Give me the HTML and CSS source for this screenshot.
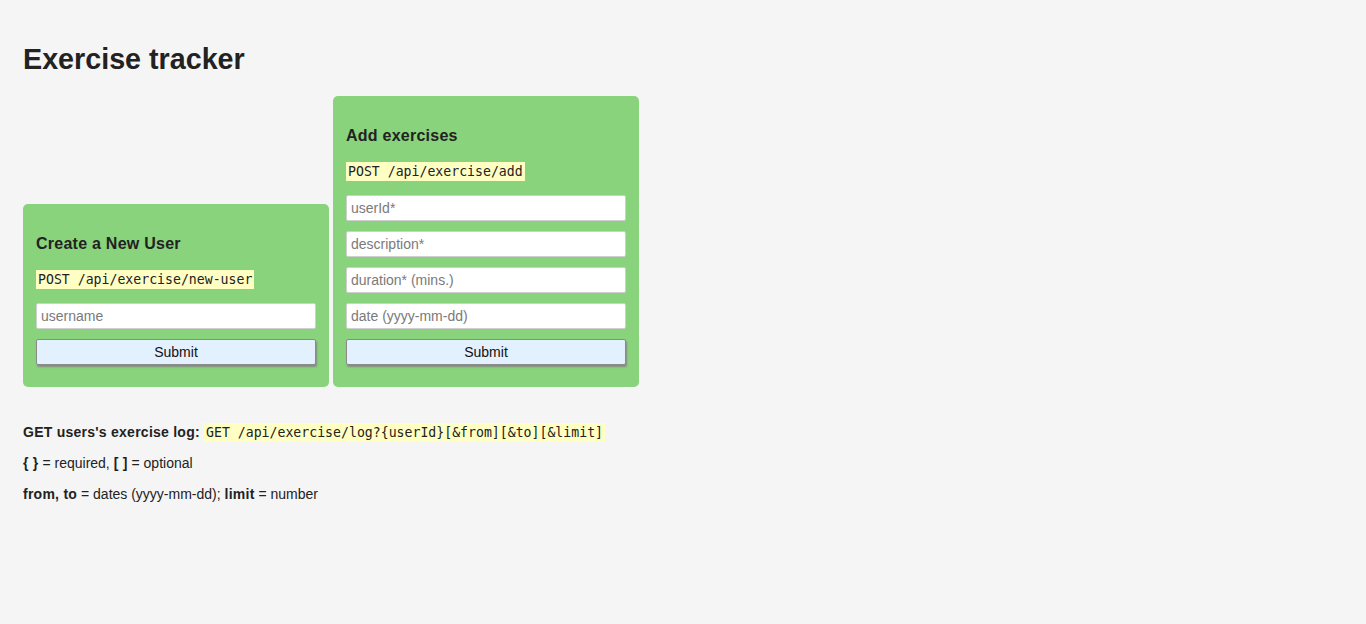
FILE: index.html
```html
<!DOCTYPE html>
<html>
<head>
<meta charset="utf-8">
<title>Exercise Tracker</title>
<link rel="stylesheet" href="styles.css">
</head>
<body>
<div class="container">
  <h1 class="title">Exercise tracker</h1>
  <div class="forms">
    <form class="card">
      <h3 class="card-title">Create a New User</h3>
      <p class="endpoint"><code>POST /api/exercise/new-user</code></p>
      <input class="field" type="text" placeholder="username">
      <button class="btn" type="button">Submit</button>
    </form>
    <form class="card">
      <h3 class="card-title">Add exercises</h3>
      <p class="endpoint"><code>POST /api/exercise/add</code></p>
      <input class="field" type="text" placeholder="userId*">
      <input class="field" type="text" placeholder="description*">
      <input class="field" type="text" placeholder="duration* (mins.)">
      <input class="field" type="text" placeholder="date (yyyy-mm-dd)">
      <button class="btn" type="button">Submit</button>
    </form>
  </div>
  <p class="info"><b>GET users's exercise log: </b><code>GET /api/exercise/log?{userId}[&amp;from][&amp;to][&amp;limit]</code></p>
  <p class="info"><b>{ }</b> = required, <b>[ ]</b> = optional</p>
  <p class="info"><b>from, to</b> = dates (yyyy-mm-dd); <b>limit</b> = number</p>
</div>
</body>
</html>
```
FILE: styles.css
```css
* { box-sizing: border-box; }
body {
  margin: 0;
  padding: 0;
  background: #f5f5f5;
  color: #222;
  font-family: "Liberation Sans", Arial, sans-serif;
  font-size: 14px;
}
.container {
  padding: 0 23px;
}
.title {
  margin: 0;
  padding-top: 42px;
  font-size: 28.7px;
  line-height: 34px;
  font-weight: bold;
}
.forms {
  display: flex;
  align-items: flex-end;
  gap: 4px;
  margin-top: 20px;
}
.card {
  width: 306px;
  background: #89d37c;
  border-radius: 5px;
  padding: 30px 13px 22px 13px;
  display: flex;
  flex-direction: column;
}
.card-title {
  margin: 0 0 15px 0;
  font-size: 16px;
  line-height: 20px;
  font-weight: bold;
  letter-spacing: 0.25px;
}
.endpoint {
  margin: 0 0 13px 0;
  line-height: 20px;
}
code {
  font-family: "DejaVu Sans Mono", "Liberation Mono", monospace;
  font-size: 13.2px;
  background: #ffffc4;
  padding: 2px 2px;
}
.field {
  height: 26px;
  margin: 0 0 10px 0;
  border: 1px solid #cfcfcf;
  border-radius: 2px;
  background: #fff;
  padding: 0 4px;
  font-family: "Liberation Sans", Arial, sans-serif;
  font-size: 14px;
  color: #222;
}
.field::placeholder { color: #7a7a7a; }
.btn {
  height: 26px;
  margin: 0;
  border: 1px solid #8a8a8a;
  border-radius: 2px;
  background: #e3f0fd;
  box-shadow: 1px 2px 2px #888;
  font-family: "Liberation Sans", Arial, sans-serif;
  font-size: 14px;
  color: #111;
}
.info {
  margin: 14px 0;
  line-height: 17px;
}
.info b { letter-spacing: 0.25px; }
.forms + .info { margin-top: 37px; }
```
